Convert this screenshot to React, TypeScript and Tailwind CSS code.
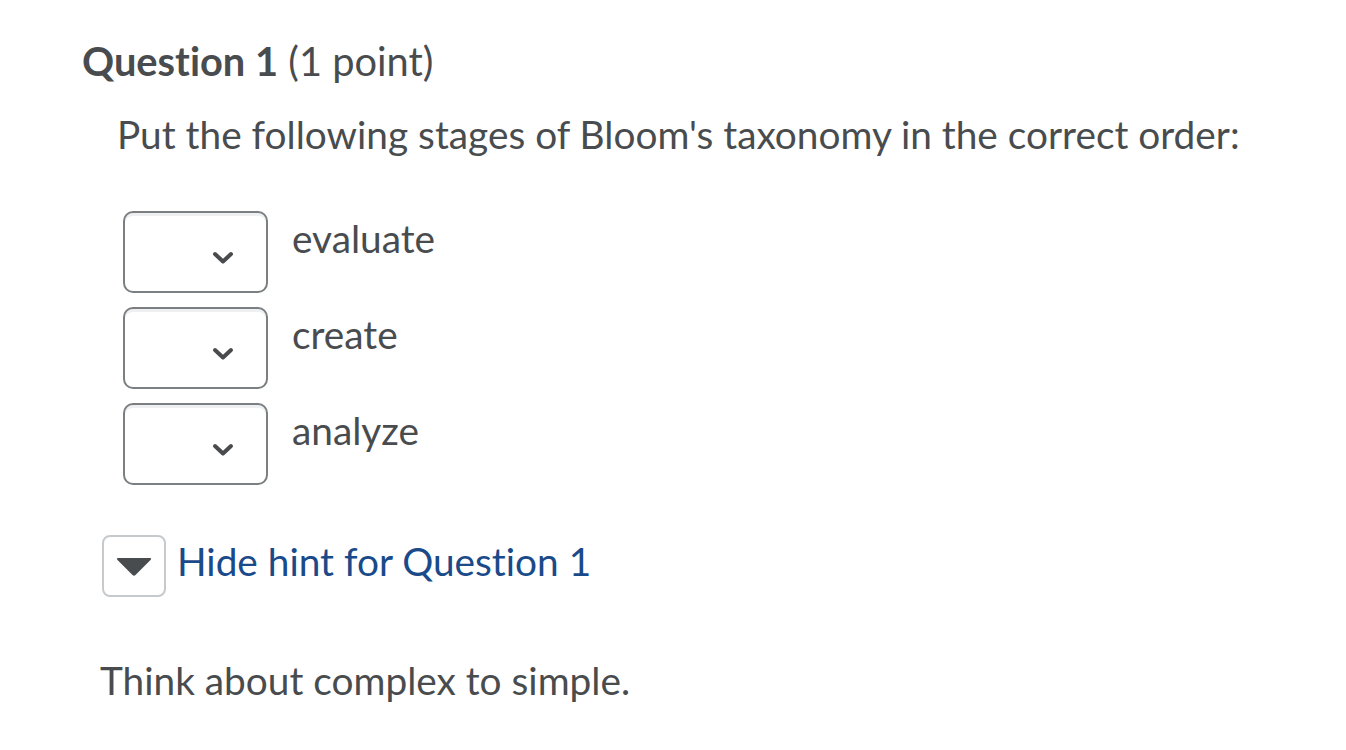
import React from "react";

function Select() {
  return (
    <div className="relative w-[145px] h-[82px] shrink-0 rounded-[10px] border-2 border-[#7c7f81] bg-white shadow-[inset_0_3px_0_0_#eef0f1]">
      <svg
        className="absolute left-[87px] top-[38px]"
        width="22"
        height="14"
        viewBox="0 0 22 14"
      >
        <path d="M3 3 L11 10.5 L19 3" fill="none" stroke="#494c4e" strokeWidth="4" strokeLinecap="round" strokeLinejoin="round" />
      </svg>
    </div>
  );
}

function Row({ label }: { label: string }) {
  return (
    <div className="flex items-start gap-[24px]">
      <Select />
      <div className="text-[38.8px] leading-[48px] pt-[3px]">{label}</div>
    </div>
  );
}

export default function App() {
  return (
    <div
      className="w-[1346px] h-[750px] bg-white text-[#494c4e] overflow-hidden [font-variant-ligatures:none]"
      style={{ fontFamily: "Lato, 'Noto Sans', sans-serif" }}
    >
      <div className="pl-[82px] pt-[36px]">
        <h1 className="text-[39.8px] leading-[50px]">
          <span className="font-bold">Question 1</span> (1 point)
        </h1>
      </div>
      <div className="pl-[117px] pt-[24px] text-[38.8px] leading-[48px]">
        Put the following stages of Bloom's taxonomy in the correct order:
      </div>
      <div className="pl-[123px] pt-[53px] flex flex-col gap-[14px]">
        <Row label="evaluate" />
        <Row label="create" />
        <Row label="analyze" />
      </div>
      <div className="pl-[102px] pt-[50px] flex items-start gap-[11px]">
        <button className="w-[64px] h-[62px] rounded-[8px] border-2 border-[#c6cacd] bg-white flex items-center justify-center">
          <svg width="38" height="21" viewBox="0 0 38 21">
            <path d="M3 2 L35 2 Q37 2 35.5 4 L20.5 19 Q19 20.5 17.5 19 L2.5 4 Q1 2 3 2 Z" fill="#494c4e" />
          </svg>
        </button>
        <span className="mt-[2px] text-[38.8px] leading-[48px] text-[#1a4a8a]">Hide hint for Question 1</span>
      </div>
      <div className="pl-[100px] pt-[59px] text-[38.8px] leading-[48px]">
        Think about complex to simple.
      </div>
    </div>
  );
}
